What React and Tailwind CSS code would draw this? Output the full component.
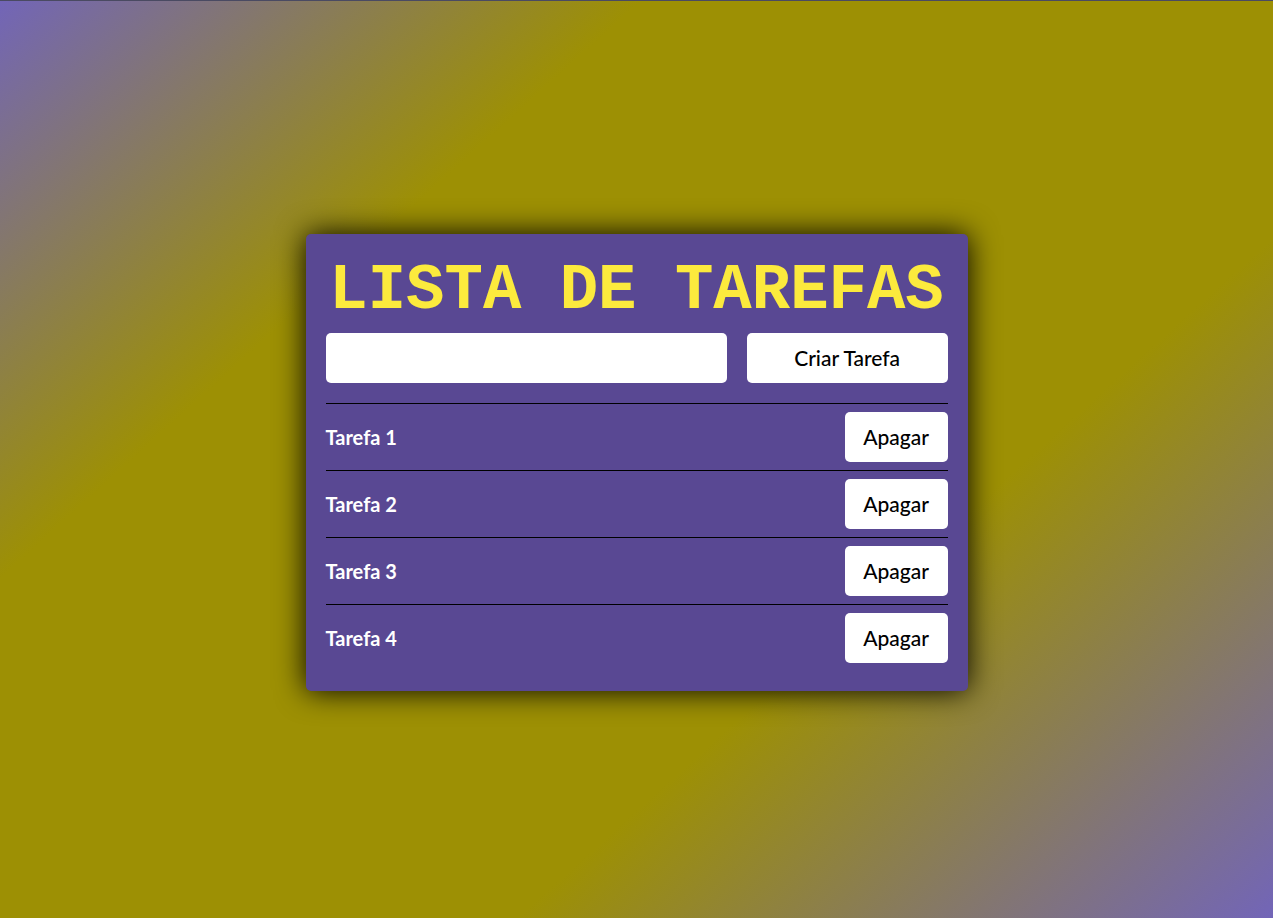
import { useState } from "react";

const initialTasks = ["Tarefa 1", "Tarefa 2", "Tarefa 3", "Tarefa 4"];

export default function App() {
  const [tasks, setTasks] = useState(initialTasks);
  const [name, setName] = useState("");

  function createTask(event) {
    event.preventDefault();
    if (!name.trim()) return;
    setTasks([...tasks, name.trim()]);
    setName("");
  }

  return (
    <main className="flex min-h-screen items-center justify-center border-t border-[#4a4a62] bg-[linear-gradient(138deg,#7265b8_0%,#9d9004_28%,#9d9004_67%,#7265b8_100%)] pt-1.5 font-['Lato',sans-serif] text-xl">
      <section className="w-full max-w-[662px] rounded-[5px] bg-[#594893] p-5 shadow-[0_0_30px_#000]">
        <h1 className="mb-5 pt-4 text-center font-['Liberation_Mono',monospace] text-[64px] leading-[43px] font-bold text-[#fcea3d] uppercase">
          Lista de Tarefas
        </h1>
        <form onSubmit={createTask} className="mb-5 grid grid-cols-[2fr_1fr] gap-5">
          <input
            type="text"
            aria-label="Nova tarefa"
            value={name}
            onChange={(event) => setName(event.target.value)}
            className="h-[50px] min-w-0 rounded-[5px] bg-white px-5 text-black outline-none"
          />
          <button type="submit" className="h-[50px] rounded-[5px] bg-white px-4 text-[21px] font-medium text-black">
            Criar Tarefa
          </button>
        </form>
        <ul>
          {tasks.map((task, index) => (
            <li key={index} className="flex items-center justify-between border-t border-black py-2">
              <span className="font-bold text-white">{task}</span>
              <button
                type="button"
                onClick={() => setTasks(tasks.filter((_, i) => i !== index))}
                className="h-[50px] min-w-[103px] rounded-[5px] bg-white px-4 text-[21px] font-medium text-black"
              >
                Apagar
              </button>
            </li>
          ))}
        </ul>
      </section>
    </main>
  );
}
